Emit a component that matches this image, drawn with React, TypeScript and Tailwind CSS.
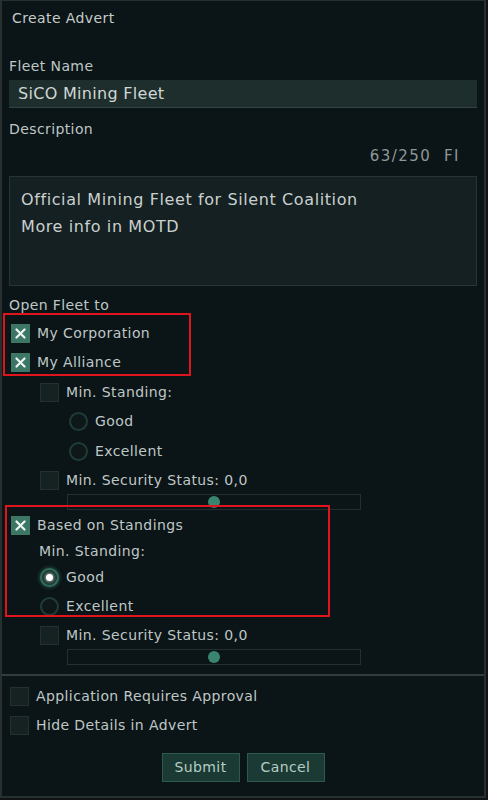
import { ReactNode } from "react";

const font = { fontFamily: '"DejaVu Sans", "Noto Sans", sans-serif' };

const Check = ({ checked }: { checked?: boolean }) =>
  checked ? (
    <div className="w-[19px] h-[19px] bg-[#3c7765] flex items-center justify-center shrink-0">
      <svg width="11" height="11" viewBox="0 0 11 11">
        <path d="M1.5 1.5 L9.5 9.5 M9.5 1.5 L1.5 9.5" stroke="#eef5f2" strokeWidth="2.2" strokeLinecap="round" />
      </svg>
    </div>
  ) : (
    <div className="w-[19px] h-[19px] bg-[#152221] border border-[#22302f] shrink-0" />
  );

const Radio = ({ checked }: { checked?: boolean }) =>
  checked ? (
    <div className="w-[19px] h-[19px] rounded-full bg-[#15302a] border-2 border-[#2f6a5a] flex items-center justify-center shrink-0 shadow-[0_0_4px_#2f6a5a]">
      <div className="w-[7px] h-[7px] rounded-full bg-white shadow-[0_0_4px_#ffffff]" />
    </div>
  ) : (
    <div className="w-[19px] h-[19px] rounded-full bg-[#0e1818] border-2 border-[#1f3d36] shrink-0" />
  );

const Row = ({ h, indent, children }: { h: string; indent: string; children: ReactNode }) => (
  <div className={`flex items-center gap-[7px] ${h} ${indent}`}>{children}</div>
);

const Slider = () => (
  <div className="ml-[65px] w-[294px] h-[16px] border border-[#243030] relative">
    <div className="absolute left-[140px] top-[1px] w-[12px] h-[12px] rounded-full bg-[#3a8570]" />
  </div>
);

export default function App() {
  return (
    <div className="w-[488px] h-[800px] bg-[#121414] relative" style={font}>
      <div className="w-[486px] h-[798px] bg-[#0b1416] border-l-2 border-r-2 border-b-2 border-t border-[#28302f] text-[#bfc7c6] text-[14px] tracking-[0.4px]">
        <div className="h-[34px] flex items-center pl-[10px] text-[#c5cccb]">Create Advert</div>
        <div className="h-[20px] mt-[21px] flex items-center pl-[7px]">Fleet Name</div>
        <div className="mx-[7px] mt-[4px] h-[28px] bg-[#1e2e2d] border-b border-[#324442] flex items-center pl-[9px] text-[16px] tracking-[0.3px] text-[#d0d7d5]">
          SiCO Mining Fleet
        </div>
        <div className="h-[20px] mt-[11px] flex items-center pl-[7px]">Description</div>
        <div className="h-[20px] mt-[7px] flex items-center justify-end pr-[24px] text-[15px] tracking-[1.5px] text-[#8f9898]">
          63/250&nbsp;&nbsp;FI
        </div>
        <div className="mx-[7px] mt-[10px] h-[110px] bg-[#152022] border border-[#263535] pl-[11px] pt-[9px] text-[16px] tracking-[0.6px] leading-[27px] text-[#c9d0cf]">
          <div>Official Mining Fleet for Silent Coalition</div>
          <div>More info in MOTD</div>
        </div>
        <div className="h-[26px] mt-[6px] flex items-center pl-[7px]">Open Fleet to</div>

        <Row h="h-[30px]" indent="pl-[9px]"><Check checked />My Corporation</Row>
        <Row h="h-[29px]" indent="pl-[9px]"><Check checked />My Alliance</Row>
        <Row h="h-[30px]" indent="pl-[38px]"><Check />Min. Standing:</Row>
        <Row h="h-[29px]" indent="pl-[67px]"><Radio />Good</Row>
        <Row h="h-[30px]" indent="pl-[67px]"><Radio />Excellent</Row>
        <Row h="h-[28px]" indent="pl-[38px]"><Check />Min. Security Status: 0,0</Row>
        <Slider />

        <Row h="h-[30px]" indent="pl-[9px]"><Check checked />Based on Standings</Row>
        <Row h="h-[23px]" indent="pl-[37px]">Min. Standing:</Row>
        <Row h="h-[28px]" indent="pl-[38px]"><Radio checked />Good</Row>
        <Row h="h-[30px]" indent="pl-[38px]"><Radio />Excellent</Row>
        <Row h="h-[28px]" indent="pl-[38px]"><Check />Min. Security Status: 0,0</Row>
        <Slider />

        <div className="mt-[9px] h-[2px] bg-[#333d3d]" />
        <div className="mt-[6px]">
          <Row h="h-[29px]" indent="pl-[8px]"><Check />Application Requires Approval</Row>
          <Row h="h-[29px]" indent="pl-[8px]"><Check />Hide Details in Advert</Row>
        </div>
        <div className="mt-[13px] flex justify-center gap-[7px] text-[14px] text-[#b5cdc5]">
          <button className="w-[78px] h-[29px] bg-[#1c3a34] border border-[#2c5a4e]">Submit</button>
          <button className="w-[78px] h-[29px] bg-[#1c3a34] border border-[#2c5a4e]">Cancel</button>
        </div>
      </div>

      <div className="absolute left-[3px] top-[313px] w-[188px] h-[63px] border-2 border-[#e0141c]" />
      <div className="absolute left-[5px] top-[505px] w-[325px] h-[112px] border-2 border-[#e0141c]" />
    </div>
  );
}
